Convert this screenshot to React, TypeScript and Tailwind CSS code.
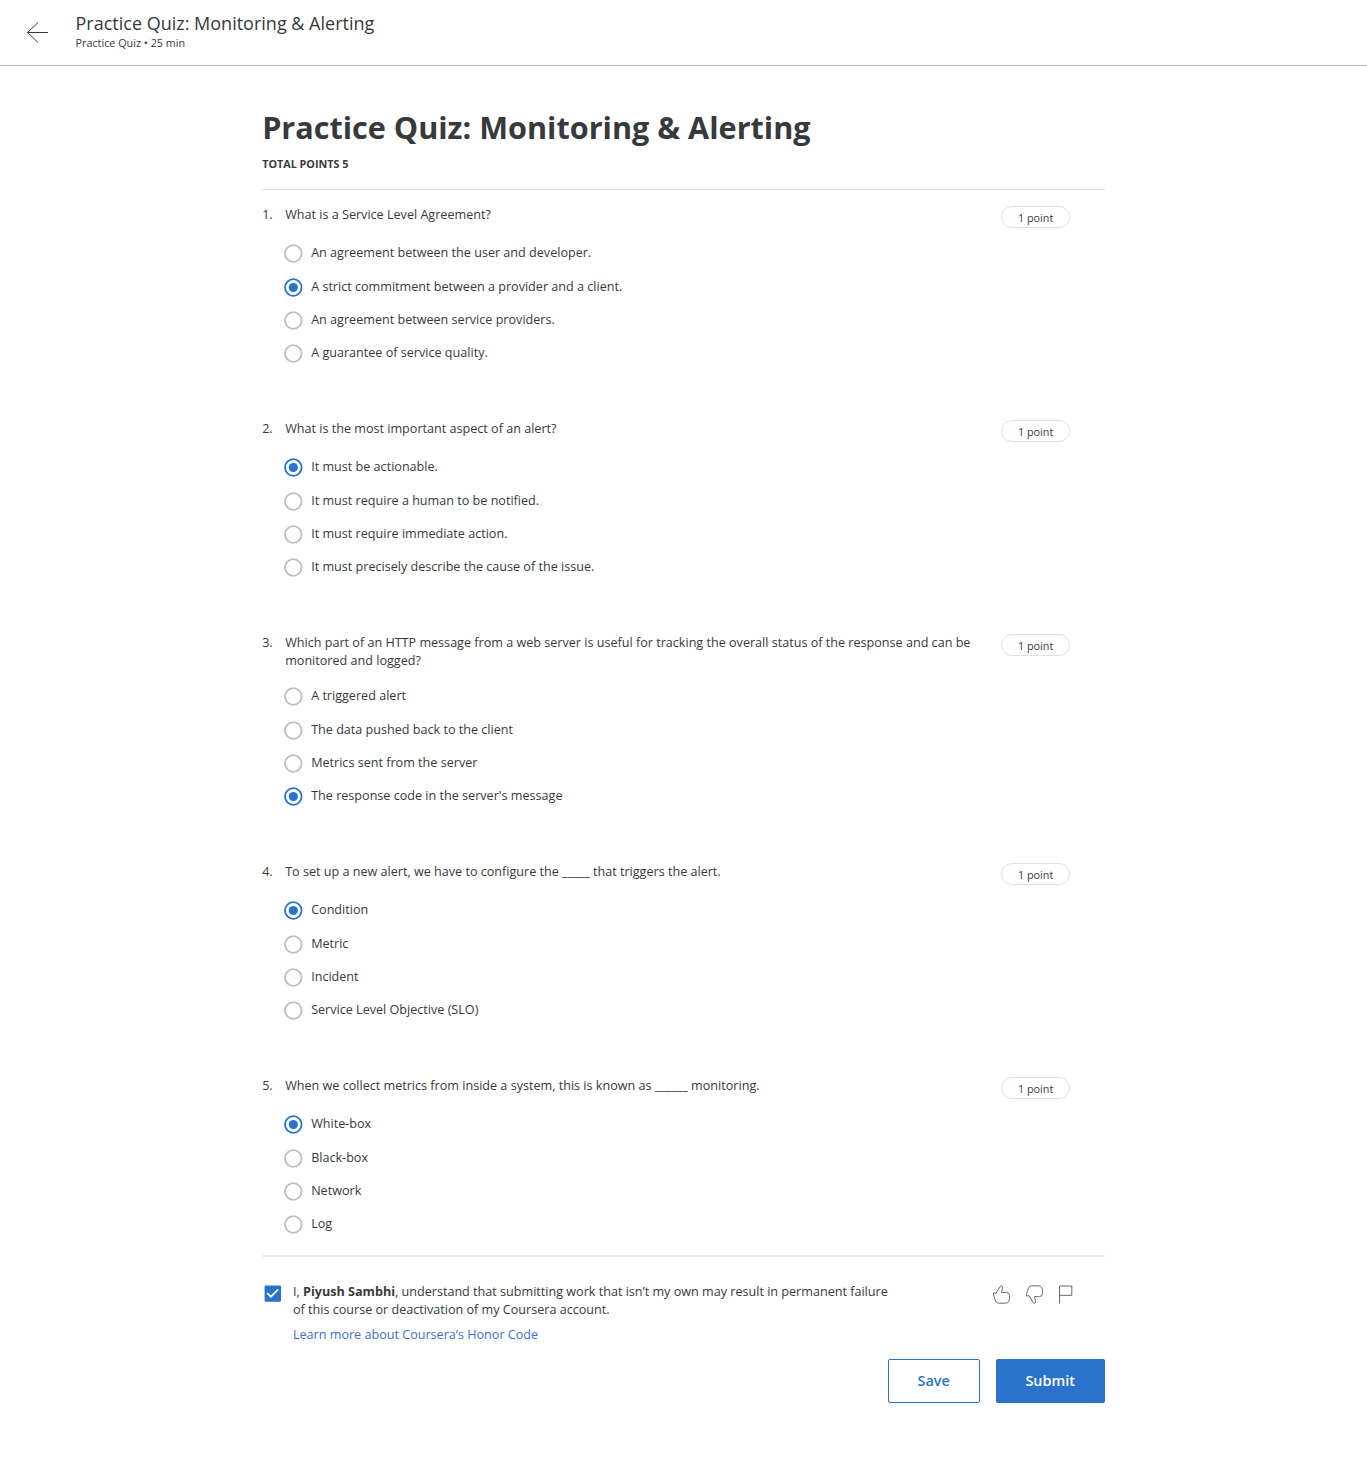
type Question = { text: string; options: string[]; selected: number };

const questions: Question[] = [
  {
    text: 'What is a Service Level Agreement?',
    options: [
      'An agreement between the user and developer.',
      'A strict commitment between a provider and a client.',
      'An agreement between service providers.',
      'A guarantee of service quality.',
    ],
    selected: 1,
  },
  {
    text: 'What is the most important aspect of an alert?',
    options: [
      'It must be actionable.',
      'It must require a human to be notified.',
      'It must require immediate action.',
      'It must precisely describe the cause of the issue.',
    ],
    selected: 0,
  },
  {
    text: 'Which part of an HTTP message from a web server is useful for tracking the overall status of the response and can be monitored and logged?',
    options: [
      'A triggered alert',
      'The data pushed back to the client',
      'Metrics sent from the server',
      "The response code in the server's message",
    ],
    selected: 3,
  },
  {
    text: 'To set up a new alert, we have to configure the _____ that triggers the alert.',
    options: ['Condition', 'Metric', 'Incident', 'Service Level Objective (SLO)'],
    selected: 0,
  },
  {
    text: 'When we collect metrics from inside a system, this is known as ______ monitoring.',
    options: ['White-box', 'Black-box', 'Network', 'Log'],
    selected: 0,
  },
];

function Radio({ checked }: { checked: boolean }) {
  return (
    <svg className="size-5 shrink-0" viewBox="0 0 20 20" fill="none">
      <circle cx="10.3" cy="9.5" r="8.3" stroke={checked ? '#2a73cc' : '#bdbdbd'} strokeWidth="1.8" />
      {checked && <circle cx="10.3" cy="9.5" r="4.6" fill="#2a73cc" />}
    </svg>
  );
}

function QuestionBlock({ question, index }: { question: Question; index: number }) {
  return (
    <section className="pb-[49.05px]">
      <div className="flex min-h-[31.6px] items-start pb-[10.5px]">
        <span className="w-[23px] shrink-0">{index + 1}.</span>
        <p className="w-[700px] shrink-0">{question.text}</p>
        <span className="-mb-2 ml-4 flex h-[22px] w-[69px] shrink-0 items-center justify-center rounded-full border border-[#e0e0e0] pt-0.5 text-[10.8px]">
          1 point
        </span>
      </div>
      {question.options.map((option, i) => (
        <div key={option} className="flex h-[33.35px] items-center pl-[21px]">
          <Radio checked={question.selected === i} />
          <span className="ml-2 pb-[2px]">{option}</span>
        </div>
      ))}
    </section>
  );
}

export default function App() {
  return (
    <div className="min-h-[1461px] bg-white font-['Open_Sans',sans-serif] text-[12.6px] leading-[18px] text-[#373a3c]">
      <header className="flex h-[66px] items-start border-b border-[#bdbdbd] pl-[27px]">
        <svg className="mt-[22px] h-[22px] w-[22px]" viewBox="0 0 22 22" fill="none" stroke="#373a3c">
          <path d="M21 10.5H.6M11 .5.6 10.5 11 20.5" />
        </svg>
        <div className="ml-[26.5px] pt-[11px]">
          <div className="text-[18px] leading-6">Practice Quiz: Monitoring &amp; Alerting</div>
          <div className="text-[10.8px] leading-4">Practice Quiz • 25 min</div>
        </div>
      </header>

      <main className="ml-[262.15px] w-[843px] pt-[39px]">
        <h1 className="text-[30.6px] leading-[44px] font-bold">Practice Quiz: Monitoring &amp; Alerting</h1>
        <div className="mt-[6px] h-[35px] border-b border-[#e0e0e0] text-[10.8px] leading-[18px] font-bold">
          TOTAL POINTS 5
        </div>

        <div className="-mb-[36px] pt-[16px]">
          {questions.map((question, i) => (
            <QuestionBlock key={question.text} question={question} index={i} />
          ))}
        </div>

        <footer className="border-t-2 border-[#eeeeee] pt-[26.4px]">
          <div className="flex items-start">
            <svg className="mt-[2px] ml-[2px] h-[17px] w-[17px] shrink-0" viewBox="0 0 17 17" fill="none">
              <rect x=".6" y=".4" width="16.4" height="16.4" rx="1.2" fill="#2a73cc" />
              <path d="m3.2 8.1 3.7 3.6 7.2-7.2" stroke="#fff" strokeWidth="1.7" />
            </svg>
            <div className="ml-[11.8px] w-[600px]">
              <p>
                {'I, '}
                <strong>Piyush Sambhi</strong>
                {', understand that submitting work that isn’t my own may result in permanent failure of this course or deactivation of my Coursera account.'}
              </p>
              <a href="#" className="mt-[7px] block text-[#3e6fd3]">Learn more about Coursera’s Honor Code</a>
            </div>
            <div className="mt-[2px] ml-[100px] flex gap-4 text-[#55585b]">
              <svg className="h-[19px] w-[17px]" viewBox="0 0 17 19" fill="none" stroke="currentColor" strokeWidth="0.9">
                <path d="M.5 7.9 3 8.3 7.5 1.2Q8.4.1 9.2 1.2 9.8 2 9.2 4L8.6 7.4H13.4Q16.5 7.6 16.5 10.5V12.5Q16.5 18.2 12.5 18.2H5.5Q2.8 18.2 2.1 15L1.3 12.5Q.3 10 .5 7.9Z" />
              </svg>
              <svg className="h-[19px] w-[17px]" viewBox="0 0 17 19" fill="none" stroke="currentColor" strokeWidth="0.9">
                <path d="M.5 11.1 3 10.7 7.5 17.8Q8.4 18.9 9.2 17.8 9.8 17 9.2 15L8.6 11.6H13.4Q16.5 11.4 16.5 8.5V6.5Q16.5.8 12.5.8H5.5Q2.8.8 2.1 4L1.3 6.5Q.3 9 .5 11.1Z" />
              </svg>
              <svg className="h-[19px] w-[14px]" viewBox="0 0 14 19" fill="none" stroke="currentColor" strokeWidth="0.9">
                <path d="M.5 18.5V1H12.8V10.3H.5" />
              </svg>
            </div>
          </div>
          <div className="mt-[14.6px] flex justify-end gap-4 text-[14.4px] font-semibold">
            <button className="h-11 w-[92px] rounded-[2px] border border-[#2a73cc] pr-px text-[#2a73cc]">Save</button>
            <button className="h-11 w-[109px] rounded-[2px] bg-[#2a73cc] pr-px text-white">Submit</button>
          </div>
        </footer>
      </main>
    </div>
  );
}
